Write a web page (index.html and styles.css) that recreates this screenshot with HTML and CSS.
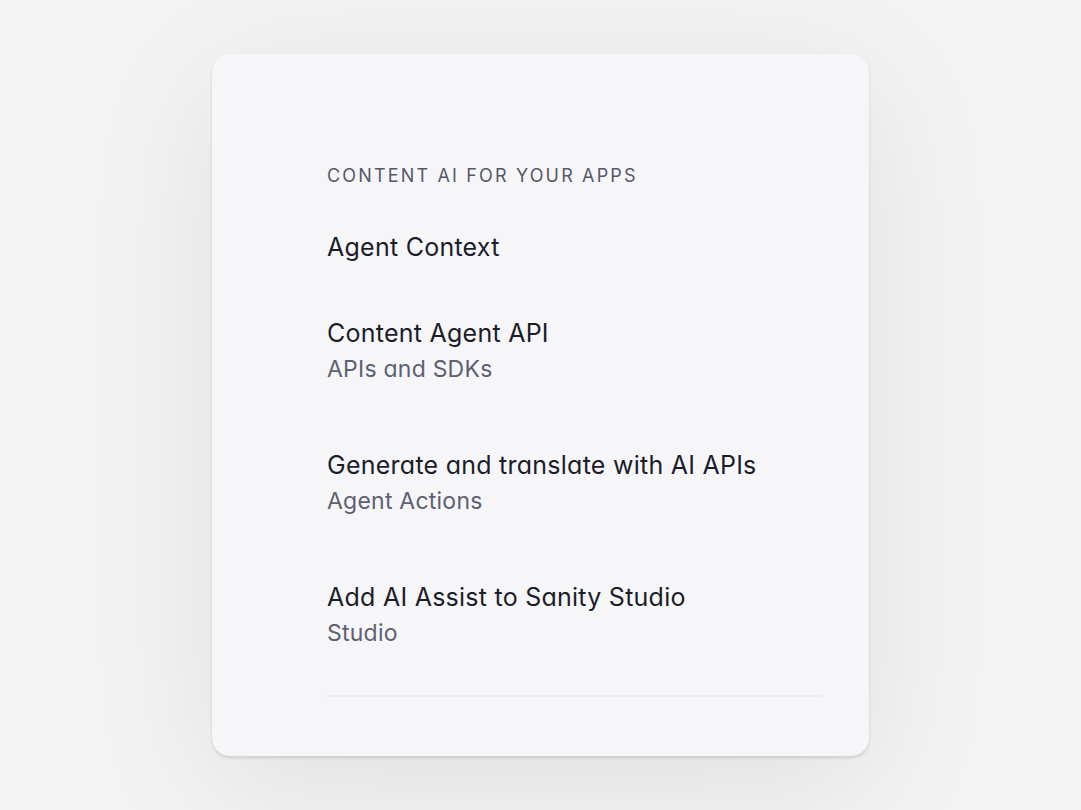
FILE: index.html
```html
<!DOCTYPE html>
<html>
<head>
  <title>Content AI for your apps</title>
  <link rel="stylesheet" href="styles.css">
</head>
<body>

<div class="card">
  <div class="menu">
    <p class="menu-label">Content AI for your apps</p>

    <ul class="menu-list">
      <li class="menu-item">
        <a href="#" class="item-title">Agent Context</a>
      </li>
      <li class="menu-item">
        <a href="#" class="item-title">Content Agent API</a>
        <span class="item-sub">APIs and SDKs</span>
      </li>
      <li class="menu-item">
        <a href="#" class="item-title">Generate and translate with AI APIs</a>
        <span class="item-sub">Agent Actions</span>
      </li>
      <li class="menu-item">
        <a href="#" class="item-title">Add AI Assist to Sanity Studio</a>
        <span class="item-sub">Studio</span>
      </li>
    </ul>

    <hr class="divider">
  </div>
</div>

</body>
</html>
```

FILE: styles.css
```css
body {
  font-family: Inter, 'Noto Sans', sans-serif;
  font-feature-settings: "cv11";
  margin: 0;
  padding: 0;
  min-height: 100vh;
  display: flex;
  align-items: center;
  justify-content: center;
  background: #f3f3f4;
}

.card {
  width: 657px;
  height: 702px;
  box-sizing: border-box;
  padding: 110px 47px 0 115px;
  background-color: #f6f6f8;
  border-radius: 18px;
  box-shadow:
    0 2px 3px rgba(0, 0, 0, 0.12),
    0 30px 140px rgba(0, 0, 0, 0.08);
}

.menu-label {
  margin: 0;
  font-size: 18px;
  line-height: 24px;
  letter-spacing: 0.12em;
  text-transform: uppercase;
  color: #555869;
}

.menu-list {
  list-style: none;
  margin: 41px 0 0;
  padding: 0;
  display: flex;
  flex-direction: column;
  gap: 50px;
}

.menu-item {
  display: flex;
  flex-direction: column;
}

.item-title {
  font-size: 25px;
  line-height: 36px;
  letter-spacing: 0.01em;
  color: #1c1d2b;
  text-decoration: none;
}

.item-sub {
  font-size: 23px;
  line-height: 36px;
  letter-spacing: 0.01em;
  color: #5d6073;
  margin-bottom: 10px;
}

.divider {
  margin: 34px 0 0;
  border: none;
  border-top: 2px solid #eeeef1;
}
```
